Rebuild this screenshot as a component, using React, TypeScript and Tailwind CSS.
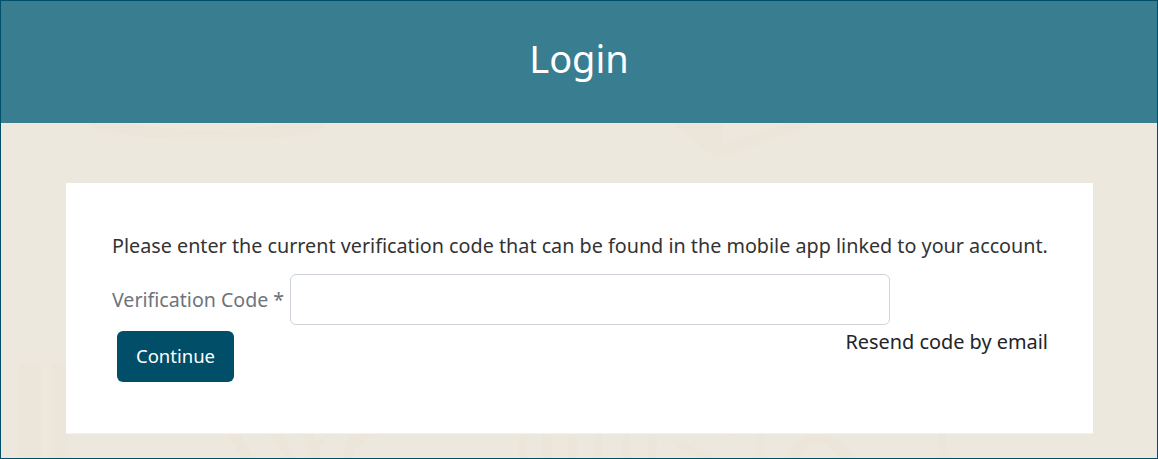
const font = { fontFamily: '"Noto Sans", sans-serif' }

function Watermark() {
  return (
    <svg className="absolute inset-0" width="1156" height="457" viewBox="1 1 1156 457">
      <g fill="#ebe5da">
        {/* top swoosh */}
        <path d="M88 123 C100 134 150 140 220 140 C285 140 320 134 327 123 H293 C260 128 225 130 200 130 C175 130 150 127 127 123 Z" />
        {/* top chevron */}
        <path d="M672 123 L717 159 L817 123 H787 L723 145 V123 Z" />
        {/* left columns */}
        <path d="M19 365 H41 V458 H19 Z M52 365 H68 V458 H52 Z" />
        {/* letters along the bottom */}
        <path d="M227 434 H240 L253 458 H243 Z M270 434 H283 L294 458 H285 Z" />
        <path d="M302 434 H314 L316 442 L330 434 L320 446 V458 H308 V446 Z" />
        <path d="M352 434 H378 C362 440 354 448 352 458 H343 C345 448 348 440 352 434 Z" />
        <path d="M519 434 H527 V458 H519 Z M542 434 H552 V458 H542 Z M568 434 H577 V458 H568 Z M595 434 H602 V458 H595 Z" />
        <path d="M624 434 H631 C629 442 629 450 630 458 H622 C621 450 622 442 624 434 Z" />
        <path d="M649 434 H657 L656 458 H648 Z" />
        <path d="M677 443 L682 442 L716 458 H702 L677 449 Z M729 434 H736 L733 437 Z" />
        <path d="M757 434 H765 L763 458 H755 Z" />
        <path d="M787 458 C792 442 803 434 817 434 C832 434 848 442 853 458 H838 C834 448 826 443 817 443 C809 443 803 449 800 458 Z" />
        <path d="M937 434 H945 L948 458 H941 Z" />
      </g>
    </svg>
  )
}

export default function App() {
  return (
    <div className="relative flex flex-col w-[1158px] h-[459px] overflow-hidden border border-[#004e68] bg-[#ece8dd]" style={font}>
      <Watermark />

      {/* Header */}
      <div className="relative flex items-center justify-center h-[122px] pb-2 bg-[#387e90] text-white text-[38px] leading-none shrink-0">
        Login
      </div>

      {/* Card */}
      <div className="relative mt-[60px] ml-[65px] mr-[64px] h-[250px] bg-white pl-[46px] pr-[45px] pt-[51px] text-[#333333] shadow-[0_1px_0_#f3f1ec]">
        <p className="text-[19.75px] leading-[24px] whitespace-nowrap">
          Please enter the current verification code that can be found in the mobile app linked to your account.
        </p>
        <div className="flex items-center mt-[16px]">
          <label className="text-[19.6px] text-[#6c757d] w-[178px] whitespace-nowrap">Verification Code *</label>
          <input type="text" className="w-[600px] h-[51px] rounded-md border border-[#ced4da] bg-white" />
        </div>
        <div className="flex justify-between items-start">
          <button className="ml-[5px] mt-[6px] w-[117px] h-[51px] pb-[2px] rounded-md bg-[#004e68] text-white text-[18.5px]">
            Continue
          </button>
          <a className="text-[19.9px] leading-[24px] text-[#212529] mt-[5px]">Resend code by email</a>
        </div>
      </div>
    </div>
  )
}
